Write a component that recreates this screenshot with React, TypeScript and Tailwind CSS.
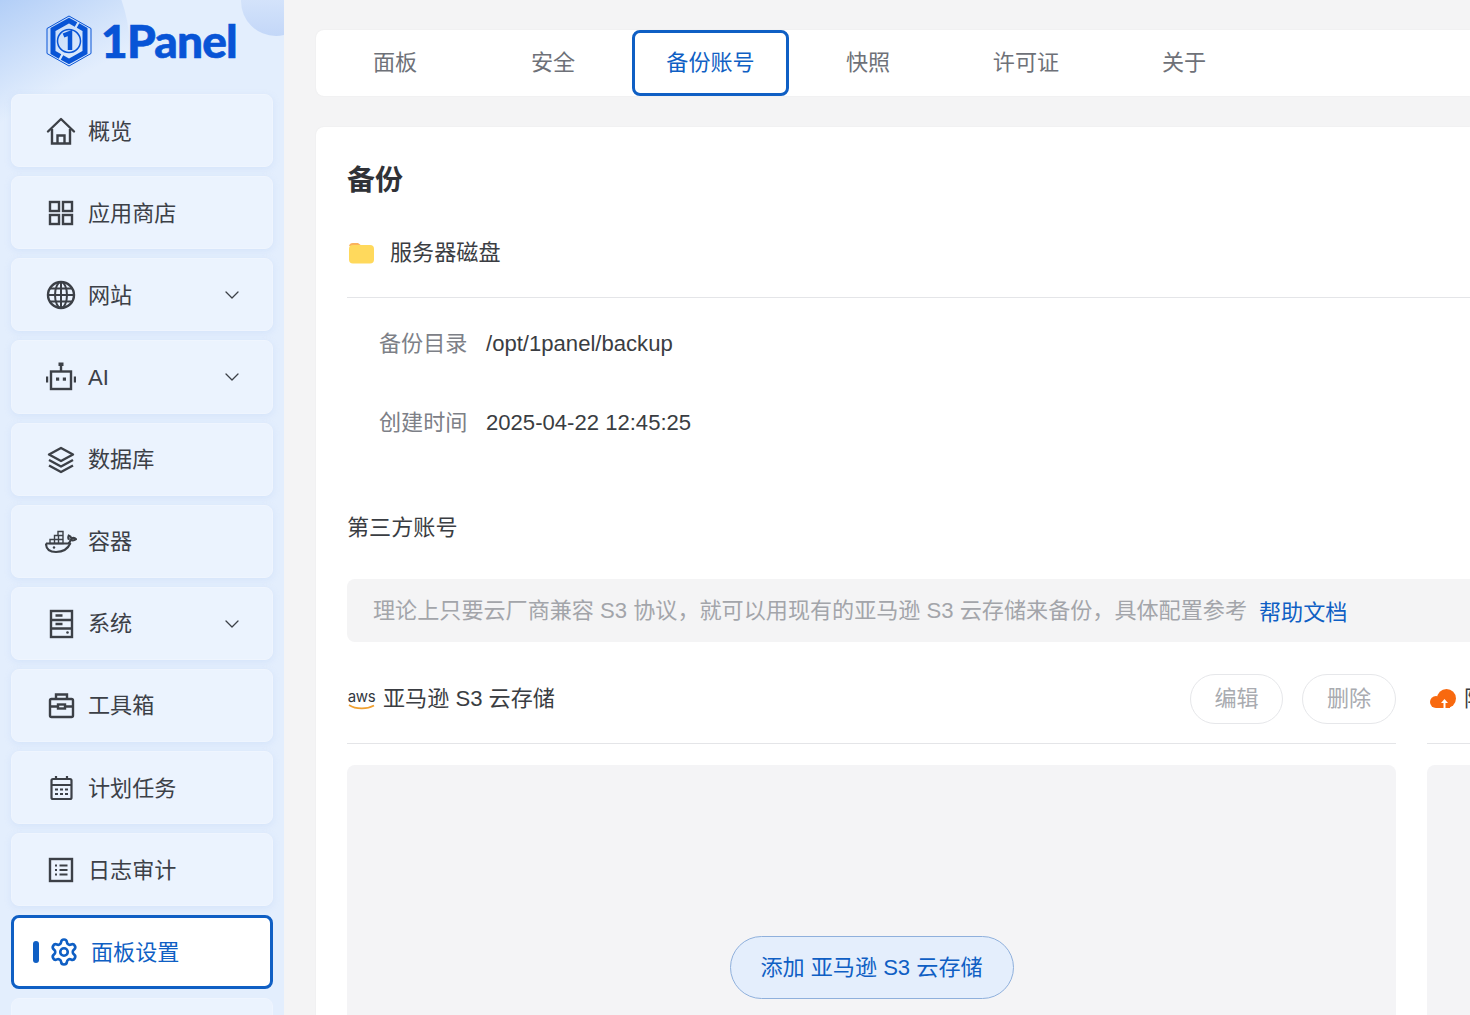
import { ChevronDown, Settings } from "lucide-react";
import type { ReactNode } from "react";

const iconProps = {
  fill: "none",
  stroke: "currentColor",
  strokeWidth: 2.4,
  viewBox: "0 0 30 30",
  className: "w-[30px] h-[30px] shrink-0",
};

const HomeIcon = () => (
  <svg {...iconProps}>
    <path d="M2 15.500 15 3l13 12.500" strokeLinejoin="round" strokeLinecap="round" />
    <path d="M6 13v14.500h18V13" />
    <path d="M11.500 27.500v-8h7v8" />
  </svg>
);

const AppsIcon = () => (
  <svg {...iconProps}>
    <rect x="4" y="4" width="9" height="9" />
    <rect x="17" y="4" width="9" height="9" />
    <rect x="4" y="17" width="9" height="9" />
    <rect x="17" y="17" width="9" height="9" />
  </svg>
);

const GlobeIcon = () => (
  <svg {...iconProps}>
    <circle cx="15" cy="15" r="13" />
    <ellipse cx="15" cy="15" rx="6" ry="13" strokeWidth="2" />
    <path d="M15 2v26M2 15h26M4 8.500h22M4 21.500h22" strokeWidth="2" />
  </svg>
);

const BotIcon = () => (
  <svg {...iconProps}>
    <rect x="5" y="9.500" width="20" height="17.500" />
    <path d="M15 9V4" />
    <rect x="12.500" y="0.500" width="5" height="3.500" fill="currentColor" stroke="none" />
    <path d="M1 14.500v6M29 14.500v6" />
    <rect x="10" y="15.500" width="3.200" height="3.200" fill="currentColor" stroke="none" />
    <rect x="16.800" y="15.500" width="3.200" height="3.200" fill="currentColor" stroke="none" />
  </svg>
);

const LayersIcon = () => (
  <svg {...iconProps}>
    <path d="M15 3 27 9.500 15 16 3 9.500Z" strokeLinejoin="round" />
    <path d="M3 15l12 6.500L27 15M3 20.500 15 27l12-6.500" strokeLinejoin="round" />
  </svg>
);

const DockerIcon = () => (
  <svg viewBox="0 0 32 24" className="w-[32px] h-[24px] shrink-0" fill="none" stroke="currentColor" strokeWidth="2.100">
    <path d="M1 13.500h22c1.500-.5 2.300-2 2.500-3.500 1.800.6 4 .4 5.500-.8-1-1.300-3-1.600-4.600-1-.5-1.500-1.500-2.300-2.700-2.600-.6 1.300-.5 2.900.3 4" />
    <path d="M1 13.500c0 5.500 3.800 8.500 10 8.500 7 0 12-3.300 14.500-9" />
    <path d="M5 9.500h13v4H5zM9.500 5.500h8.500v4H9.500zM13 1.500h5v4h-5zM9.500 9.500v4M13.500 9.500v4M13.500 5.500v4" strokeWidth="1.400" />
    <circle cx="9" cy="17.500" r="1.200" fill="currentColor" stroke="none" />
  </svg>
);

const ServerIcon = () => (
  <svg {...iconProps}>
    <rect x="5" y="2" width="21" height="26" />
    <path d="M5 11h21M5 19.500h21M9.500 6.500h7M9.500 15h7" />
    <circle cx="21.500" cy="23.500" r="1.300" fill="currentColor" stroke="none" />
  </svg>
);

const ToolboxIcon = () => (
  <svg {...iconProps}>
    <rect x="4" y="8" width="23" height="18" rx="1.500" />
    <path d="M10 8V3.500h11V8M4 15.500h8M19 15.500h8" />
    <rect x="12" y="13.500" width="7" height="4" />
  </svg>
);

const CalendarIcon = () => (
  <svg {...iconProps} strokeWidth="2.200">
    <rect x="5.500" y="6" width="20" height="20" rx="1.500" />
    <path d="M10 3v4M21 3v4M5.500 12h20" />
    <path d="M9 16.500h3M14 16.500h3M19 16.500h3M9 21h3M14 21h3M19 21h3" strokeWidth="2" />
  </svg>
);

const ListIcon = () => (
  <svg {...iconProps}>
    <rect x="4" y="4" width="22" height="22" />
    <path d="M13.500 10.500h8M13.500 15h8M13.500 19.500h8M9 10.500h2M9 15h2M9 19.500h2" strokeWidth="2" />
  </svg>
);

const Logo = () => (
  <svg viewBox="0 0 46 52" className="w-[46px] h-[52px] shrink-0" fill="none" stroke="#0854d6">
    <path d="M23 1 45 13.500v25L23 51 1 38.500v-25Z" strokeWidth="1" />
    <path d="M30 9.500 23 5.500 7 14.500v23l7 4M16 42.500l7 4 16-9v-23l-7-4" strokeWidth="5" />
    <circle cx="23" cy="26" r="11.500" strokeWidth="1.500" />
    <path d="M17.500 20.500l6.500-2.500v17" strokeWidth="4.500" />
  </svg>
);

type NavItem = { label: string; icon: ReactNode; arrow?: boolean };

const navItems: NavItem[] = [
  { label: "概览", icon: <HomeIcon /> },
  { label: "应用商店", icon: <AppsIcon /> },
  { label: "网站", icon: <GlobeIcon />, arrow: true },
  { label: "AI", icon: <BotIcon />, arrow: true },
  { label: "数据库", icon: <LayersIcon /> },
  { label: "容器", icon: <DockerIcon /> },
  { label: "系统", icon: <ServerIcon />, arrow: true },
  { label: "工具箱", icon: <ToolboxIcon /> },
  { label: "计划任务", icon: <CalendarIcon /> },
  { label: "日志审计", icon: <ListIcon /> },
];

const tabs = ["面板", "安全", "备份账号", "快照", "许可证", "关于"];

const Sidebar = () => (
  <aside className="relative w-[284px] shrink-0 h-full overflow-hidden bg-[#e3eefd]">
    {/* Background blobs */}
    <div className="absolute -left-[170px] -top-[100px] w-[300px] h-[300px] rounded-full bg-[linear-gradient(150deg,#8ab4f2_20%,#e3eefd_68%)]" />
    <div className="absolute -right-[27px] -top-[34px] w-[70px] h-[70px] rounded-full bg-gradient-to-b from-[#e3eefd] to-[#c3d7f8]" />

    <div className="relative flex items-center pl-[46px] h-[94px] pb-[12px]">
      <Logo />
      <span className="ml-[9px] text-[46px] leading-none font-black tracking-[-0.8px] text-[#0854d6] [-webkit-text-stroke:0.6px_#0854d6] font-['Lato',sans-serif]">
        1Panel
      </span>
    </div>

    <nav className="relative flex flex-col gap-[9px] px-[11px]">
      {navItems.map((item) => (
        <div
          key={item.label}
          className="flex items-center h-[73.150px] rounded-lg bg-[#ebf3fe] border border-[#eff5fe] shadow-[0_2px_6px_rgba(170,200,245,0.25)] pl-[34px] pr-[28px] pt-[1px] text-[#3c4047]"
        >
          <span className="w-[30px] flex justify-center">{item.icon}</span>
          <span className="ml-[12px] text-[22.100px] flex-1">{item.label}</span>
          {item.arrow && <ChevronDown className="w-6 h-6" strokeWidth={1.3} />}
        </div>
      ))}
      <div className="flex items-center h-[73.150px] rounded-lg bg-white border-[3px] border-[#0f5fc4] pl-[19px] pt-[1px] text-[#0f5fc4]">
        <span className="w-[6px] h-[22px] rounded-full bg-[#0f5fc4]" />
        <Settings className="ml-[10px] w-[30px] h-[30px]" strokeWidth={2.1} />
        <span className="ml-[12px] text-[22.100px]">面板设置</span>
      </div>
      <div className="h-[73px] rounded-lg bg-[#ebf3fe] border border-[#eff5fe]" />
    </nav>
  </aside>
);

const AwsLogo = () => (
  <span className="w-[29px] -mt-[10px] flex flex-col items-center shrink-0 text-[#33383f]">
    <span className="text-[15px] leading-[14px] tracking-[-0.3px] font-['Inter',sans-serif]">aws</span>
    <svg viewBox="0 0 28 6" className="w-[28px] h-[6px]" fill="none">
      <path d="M1 1c7 4.500 18 4.500 25 .5" stroke="#f0a030" strokeWidth="1.700" />
    </svg>
  </span>
);

const AccountColumn = () => (
  <div className="w-[1049px] shrink-0 flex flex-col">
    <div className="flex items-center h-[78px] border-b border-[#e4e5e8]">
      <AwsLogo />
      <span className="ml-[7px] text-[22.100px] text-[#3a3d42] flex-1 -mt-[12px]">亚马逊 S3 云存储</span>
      <div className="flex gap-[19px] -mt-[12px]">
        <button className="w-[93px] h-[50px] rounded-full border border-[#e6e7ea] bg-white text-[22.100px] text-[#a9abb0]">编辑</button>
        <button className="w-[94px] h-[50px] rounded-full border border-[#e6e7ea] bg-white text-[22.100px] text-[#a9abb0]">删除</button>
      </div>
    </div>
    <div className="mt-[21px] h-[400px] rounded-lg bg-[#f4f4f6] flex justify-center pt-[171px]">
      <button className="w-[284px] h-[63px] rounded-full border border-[#8fb0dc] bg-[#e4eefc] text-[22.100px] text-[#0f5fc4]">
        添加 亚马逊 S3 云存储
      </button>
    </div>
  </div>
);

const AliyunColumn = () => (
  <div className="w-[400px] shrink-0 flex flex-col">
    <div className="flex items-center h-[78px] border-b border-[#e4e5e8]">
      <svg viewBox="0 0 27 20" className="w-[27px] h-[20px] -mt-[12px] ml-[3px] shrink-0">
        <circle cx="16.500" cy="9.500" r="9.500" fill="#f8690f" />
        <circle cx="6" cy="13" r="6" fill="#f8690f" />
        <rect x="6" y="12" width="14" height="7" fill="#f8690f" />
        <path d="M13.500 19v-5h-2.500l3.500-4 3.500 4h-2.500v5Z" fill="#ffffff" />
      </svg>
      <span className="ml-[7px] text-[22.100px] text-[#3a3d42] whitespace-nowrap -mt-[12px]">阿里云盘</span>
    </div>
    <div className="mt-[21px] h-[400px] rounded-lg bg-[#f4f4f6]" />
  </div>
);

export default function App() {
  return (
    <div className="flex w-[1470px] h-[1015px] overflow-hidden bg-[#f4f4f5] font-['Liberation_Sans','Noto_Sans_CJK_SC',sans-serif]">
      <Sidebar />

      <main className="flex-1 min-w-0 pl-[32px] pt-[30px] overflow-hidden">
        {/* Tabs */}
        <div className="flex h-[66px] bg-white rounded-l-lg shadow-[0_0_2px_rgba(0,0,0,0.06)]">
          {tabs.map((tab) => {
            const active = tab === "备份账号";
            return (
              <div
                key={tab}
                className={
                  active
                    ? "w-[157px] h-[66px] flex items-center justify-center rounded-lg border-[3px] border-[#0f5fc4] text-[22.100px] text-[#0f5fc4]"
                    : "w-[158px] h-[66px] flex items-center justify-center text-[22.100px] text-[#6e7178]"
                }
              >
                {tab}
              </div>
            );
          })}
        </div>

        {/* Backup card */}
        <div className="mt-[31px] h-[950px] bg-white rounded-l-lg pl-[31px] shadow-[0_0_2px_rgba(0,0,0,0.06)]">
          <h1 className="pt-[32px] text-[28px] leading-[44px] font-bold text-[#303237]">备份</h1>

          <div className="mt-[29px] flex items-center h-[40px] pt-[1px]">
            <svg viewBox="0 0 26 22" className="w-[26px] h-[22px] ml-[1px]">
              <path d="M1 5a4 4 0 0 1 4-4h5l4 3H1Z" fill="#fbb25c" />
              <rect x="1" y="3" width="25" height="18.500" rx="4" fill="#ffd95c" />
            </svg>
            <span className="ml-[16px] text-[22.100px] text-[#3a3d42]">服务器磁盘</span>
          </div>

          <div className="mt-[25px] border-t border-[#e4e5e8] pl-[32px] pt-[26px] text-[22.100px]">
            <div className="flex items-center h-[40px]">
              <span className="w-[107px] text-[#7d8087]">备份目录</span>
              <span className="text-[#3a3d42]">/opt/1panel/backup</span>
            </div>
            <div className="mt-[39px] flex items-center h-[40px]">
              <span className="w-[107px] text-[#7d8087]">创建时间</span>
              <span className="text-[#3a3d42]">2025-04-22 12:45:25</span>
            </div>
          </div>

          <div className="mt-[65px] h-[40px] flex items-center text-[22.100px] text-[#3a3d42]">第三方账号</div>

          <div className="mt-[31px] h-[63px] pt-[1px] rounded-l-lg bg-[#f4f4f5] pl-[26px] flex items-center whitespace-nowrap text-[22.100px] text-[#a3a5aa]">
            理论上只要云厂商兼容 S3 协议，就可以用现有的亚马逊 S3 云存储来备份，具体配置参考
            <span className="ml-[12px] mt-[3px] text-[#0f5fc4]">帮助文档</span>
          </div>

          <div className="mt-[24px] flex gap-[31px]">
            <AccountColumn />
            <AliyunColumn />
          </div>
        </div>
      </main>
    </div>
  );
}
